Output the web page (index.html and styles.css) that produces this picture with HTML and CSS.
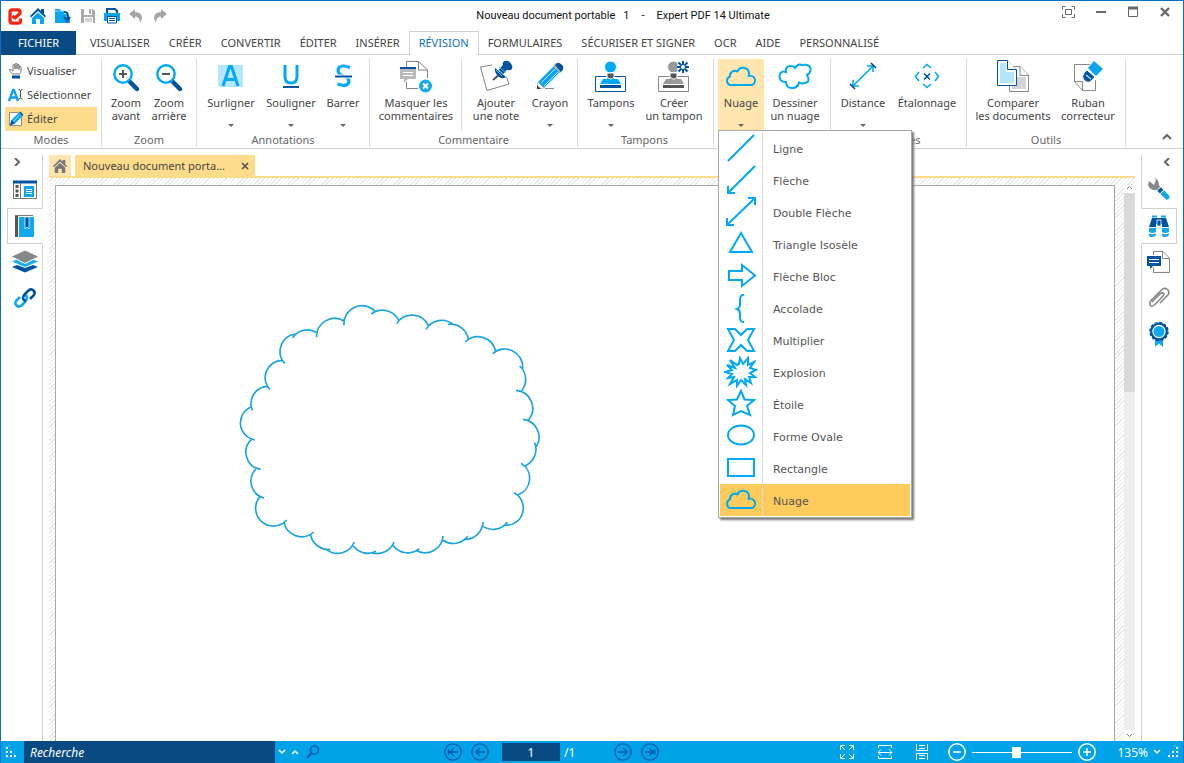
FILE: index.html
```html
<!DOCTYPE html>
<html lang="fr">
<head>
<meta charset="utf-8">
<title>Nouveau document portable 1 - Expert PDF 14 Ultimate</title>
<link rel="stylesheet" href="styles.css">
</head>
<body>
<div class="app">
<header class="titlebar">
  <div class="quick">
    <svg class="logo" width="14" height="17" viewBox="0 0 14 17"><path d="M12.500 10.500V13Q12.500 15.200 10 15.200H4.500Q2 15.200 2 12.500V4.500Q2 1.800 4.500 1.800H10Q12 1.800 12 4V5.500L7 10L4.500 8" fill="none" stroke="#f9230f" stroke-width="3.300" stroke-linejoin="round"/></svg>
    <button aria-label="Accueil"><svg width="16" height="16" viewBox="0 0 16 16"><use href="#i-home"/></svg></button>
    <button aria-label="Ouvrir"><svg width="18" height="16" viewBox="0 0 18 16"><path d="M1 1H6L7 3H16V15H1Z" fill="#0aa5ee"/><path d="M1 3H16" stroke="#8ed4f5"/><path d="M10 4H13Q17 5 14 10" fill="none" stroke="#fff" stroke-width="4"/><path d="M10 4Q16 4 13 12M10 9L13 13L16 9" fill="none" stroke="#0053a0" stroke-width="2"/></svg></button>
    <button aria-label="Enregistrer"><svg width="16" height="16" viewBox="0 0 16 16"><path d="M1 1H13L15 3V15H1Z" fill="#a9abad"/><path d="M4 1H12V7H4ZM4 9H13V15H4Z" fill="#fff"/><path d="M9 1H11V6H9Z" fill="#a9abad"/><path d="M5 11H12M5 13H12" stroke="#a9abad"/></svg></button>
    <button aria-label="Imprimer"><svg width="16" height="16" viewBox="0 0 16 16"><path d="M0 5H16V13H0Z" fill="#0aa5ee"/><path d="M3 5V1H11L13 3V5" fill="#fff" stroke="#0053a0" stroke-width="2"/><path d="M3.500 8.500H12.500V15H3.500Z" fill="#fff" stroke="#0053a0"/><path d="M5 10.500H11M5 12.500H11" stroke="#0053a0"/></svg></button>
    <button aria-label="Annuler"><svg width="16" height="16" viewBox="0 0 16 16"><use href="#i-undo"/></svg></button>
    <button aria-label="Rétablir"><svg width="16" height="16" viewBox="0 0 16 16"><g transform="matrix(-1 0 0 1 16 0)"><use href="#i-undo"/></g></svg></button>
  </div>
  <h1 class="title"><span>Nouveau document portable</span><span>1</span><span class="dash">-</span><span>Expert PDF 14 Ultimate</span></h1>
  <div class="winbtns">
    <button aria-label="Plein écran"><svg width="13" height="12" viewBox="0 0 13 12"><path d="M.5 3.500V.5H3.500M9.500 .5H12.500V3.500M12.500 8V11.500H9.500M3.500 11.500H.5V8M3.500 3.500H9.500V8.500H3.500Z" fill="none" stroke="#666"/></svg></button>
    <button aria-label="Réduire"><svg width="12" height="12" viewBox="0 0 12 12"><path d="M1 6H11" stroke="#666" stroke-width="2"/></svg></button>
    <button aria-label="Agrandir"><svg width="12" height="12" viewBox="0 0 12 12"><path d="M1.500 1V10.500H10.500V1" fill="none" stroke="#666"/><path d="M1 2H11" stroke="#666" stroke-width="3"/></svg></button>
    <button aria-label="Fermer"><svg width="12" height="12" viewBox="0 0 12 12"><path d="M2 2L10 10M10 2L2 10" stroke="#666" stroke-width="2.400"/></svg></button>
  </div>
</header>

<nav class="tabs">
  <button class="tab file">FICHIER</button>
  <button class="tab">VISUALISER</button>
  <button class="tab">CRÉER</button>
  <button class="tab">CONVERTIR</button>
  <button class="tab">ÉDITER</button>
  <button class="tab">INSÉRER</button>
  <button class="tab active">RÉVISION</button>
  <button class="tab">FORMULAIRES</button>
  <button class="tab">SÉCURISER ET SIGNER</button>
  <button class="tab">OCR</button>
  <button class="tab">AIDE</button>
  <button class="tab">PERSONNALISÉ</button>
</nav>

<section class="ribbon">
  <div class="group modes">
    <div class="mode-list">
      <button class="mode"><svg width="16" height="17" viewBox="0 0 16 17"><path d="M4.500 12Q1 9 1.500 7.500Q3 7 5 9V3Q6 1.500 7 3V7V2Q8 .5 9 2V7V2.500Q10 1 11 3V7.500V4.500Q12 3 13 5V9Q13 11 11.500 12Z" fill="#fff" stroke="#777"/><path d="M4 15H12" stroke="#00509f" stroke-width="3"/></svg>Visualiser</button>
      <button class="mode"><svg width="16" height="17" viewBox="0 0 16 17"><path d="M1 15L5 4H6L10 15M2.500 11.500H8.500" fill="none" stroke="#0aa5ee" stroke-width="2.400"/><path d="M10.500 3.500Q12.500 3.500 12.500 5V11.500Q12.500 13 10.500 13M14.500 3.500Q12.500 3.500 12.500 5M12.500 11.500Q12.500 13 14.500 13" fill="none" stroke="#555"/></svg>Sélectionner</button>
      <button class="mode on"><svg width="16" height="17" viewBox="0 0 16 17"><path d="M1.500 2.500H10L13.500 6V15.500H1.500Z" fill="#fff" stroke="#888"/><path d="M2 15L3.500 10L11 2.500L14.500 6L7 13.500Z" fill="#0aa5ee"/><path d="M11 2.500L12.500 1.500L15.500 5L14.500 6Z" fill="#0053a0"/><path d="M5 12L12 4.500" stroke="#8edaff"/><path d="M2 15.500L3.500 10L7 13.500Z" fill="#0053a0"/></svg>Éditer</button>
    </div>
    <h2>Modes</h2>
  </div>
  <div class="group zoomg">
    <div class="items">
      <button class="cmd w42"><svg class="ico" viewBox="0 0 36 36"><use href="#i-lens"/><path d="M11 16H19M15 12V20" stroke="#555" stroke-width="2"/></svg><span>Zoom<br>avant</span></button>
      <button class="cmd w44"><svg class="ico" viewBox="0 0 36 36"><use href="#i-lens"/><path d="M11 16H19" stroke="#555" stroke-width="2"/></svg><span>Zoom<br>arrière</span></button>
    </div>
    <h2>Zoom</h2>
  </div>
  <div class="group annot">
    <div class="items">
      <button class="cmd w62 drop"><svg class="ico" viewBox="0 0 36 36"><rect x="5" y="7" width="25" height="22" fill="#b5e6ff"/><path d="M10 28L16.500 8.500H18.500L25 28M12.500 21.500H22.500" fill="none" stroke="#00a9f4" stroke-width="3"/></svg><span>Surligner</span></button>
      <button class="cmd w58 drop"><svg class="ico" viewBox="0 0 36 36"><path d="M12 7V18.500Q12 25 18 25Q24 25 24 18.500V7" fill="none" stroke="#00a9f4" stroke-width="3"/><path d="M10 29H26" stroke="#0053a0" stroke-width="2"/></svg><span>Souligner</span></button>
      <button class="cmd w46 drop"><svg class="ico" viewBox="0 0 36 36"><path d="M25 9.500Q21 8 18.500 8Q13 8 13 12.500Q13 16 18.500 18Q24 20 24 23.500Q23 29.500 12.500 26" fill="none" stroke="#00a9f4" stroke-width="3.200"/><path d="M10 18.500H27" stroke="#fff" stroke-width="4"/><path d="M10 18.500H27" stroke="#0053a0" stroke-width="2"/></svg><span>Barrer</span></button>
    </div>
    <h2>Annotations</h2>
  </div>
  <div class="group comm">
    <div class="items">
      <button class="cmd w86"><svg class="ico" viewBox="0 0 36 36"><path d="M8.500 9V3.500H20.500L29.500 12V20M20.500 3.500V12H29.500M8.500 24V30.500H20" fill="none" stroke="#808285"/><path d="M2 9H18V21H10L6 25V21H2Z" fill="#b8babc"/><path d="M2 10H18" stroke="#0053a0" stroke-width="2"/><path d="M5 14.500H15M5 17.500H15" stroke="#fff"/><circle cx="27.500" cy="28" r="6.500" fill="#15a9ef"/><path d="M25 25.500L30 30.500M30 25.500L25 30.500" stroke="#fff" stroke-width="2"/></svg><span>Masquer les<br>commentaires</span></button>
      <i class="vsep"></i>
      <button class="cmd w62"><svg class="ico" viewBox="0 0 36 36"><path d="M14 7L2.500 9L9 32.500L31 26L28.500 19" fill="none" stroke="#808285"/><path d="M23 15L15 22" stroke="#555" stroke-width="2"/><path d="M17 10L28 19Q24 22 20 18Q16 14 17 10Z" fill="#0053a0"/><path d="M23 14L28 8" stroke="#0053a0" stroke-width="6"/><ellipse cx="29.500" cy="7.500" rx="5.500" ry="4" transform="rotate(45 29.500 7.500)" fill="#0053a0"/><path d="M21 9L28 15M18 12L24 18" stroke="#70aee0"/></svg><span>Ajouter<br>une note</span></button>
      <button class="cmd w46 drop"><svg class="ico" viewBox="0 0 36 36"><path d="M6 24L22 8L28 14L12 30L5 31Z" fill="#0aa5ee"/><path d="M9 25L23 11M12 28L26 14" stroke="#b2e7ff"/><path d="M6 24L5 31L12 30Z" fill="#fff" stroke="#999" stroke-width=".5"/><path d="M5 27V31H9Z" fill="#444"/><path d="M21 8L24 5L31 12L28 15Z" fill="#b4b4b4"/><path d="M23 7L25 5Q27 4 31 8Q32 11 29 14Z" fill="#0053a0"/><path d="M13 30.500H22" stroke="#888"/></svg><span>Crayon</span></button>
    </div>
    <h2>Commentaire</h2>
  </div>
  <div class="group tamp">
    <div class="items">
      <button class="cmd w62 drop"><svg class="ico" viewBox="0 0 36 36"><path d="M2.500 18.500H32.500V33.500H2.500Z" fill="none" stroke="#0053a0"/><circle cx="17.500" cy="9" r="6" fill="#00a9f4" stroke="#fff"/><path d="M14 15H21V21H25L28 26H7L10 21H14Z" fill="#00a9f4"/><path d="M14 15H21V19Q18 23 14 19Z" fill="#555" stroke="#fff"/><path d="M7 28.500H28" stroke="#0053a0" stroke-width="3"/></svg><span>Tampons</span></button>
      <button class="cmd w64"><svg class="ico" viewBox="0 0 36 36"><path d="M2.500 18.500H32.500V33.500H2.500Z" fill="none" stroke="#888"/><circle cx="17.500" cy="9" r="6" fill="#999" stroke="#fff"/><path d="M14 15H21V21H25L28 26H7L10 21H14Z" fill="#999"/><path d="M14 15H21V19Q18 23 14 19Z" fill="#555" stroke="#fff"/><path d="M7 28.500H28" stroke="#555" stroke-width="3"/><path d="M27 3V15M21 9H33M22.500 4.500L31.500 13.500M31.500 4.500L22.500 13.500" stroke="#fff" stroke-width="4"/><path d="M27 3V15M21 9H33M22.500 4.500L31.500 13.500M31.500 4.500L22.500 13.500" stroke="#0053a0" stroke-width="2"/><circle cx="27" cy="9" r="2" fill="#fff"/></svg><span>Créer<br>un tampon</span></button>
    </div>
    <h2>Tampons</h2>
  </div>
  <div class="group shapes">
    <div class="items">
      <div class="menu-anchor">
        <button class="cmd w46 drop on" aria-expanded="true"><svg class="ico" viewBox="0 0 36 36"><use href="#i-cloud" transform="translate(1 8)"/></svg><span>Nuage</span></button>
        <ul class="menu">
          <li><button><svg viewBox="0 0 34 32"><path d="M4 29L30 3"/></svg><span>Ligne</span></button></li>
          <li><button><svg viewBox="0 0 34 32"><path d="M4 29L31 2M4 22V29H11"/></svg><span>Flèche</span></button></li>
          <li><button><svg viewBox="0 0 34 32"><path d="M3 29L31 2M3 22V29H10M24 2H31V9"/></svg><span>Double Flèche</span></button></li>
          <li><button><svg viewBox="0 0 34 32"><path d="M17 5L28 24H6Z"/></svg><span>Triangle Isosèle</span></button></li>
          <li><button><svg viewBox="0 0 34 32"><path d="M5 11H18V5L31 15.500L18 26V20H5Z"/></svg><span>Flèche Bloc</span></button></li>
          <li><button><svg viewBox="0 0 34 32"><path d="M20 3Q16 2.500 16 8V12Q16 16 13 17Q16 18 16 22V25Q16 30.500 20 30"/></svg><span>Accolade</span></button></li>
          <li><button><svg viewBox="0 0 34 32"><path d="M4 5H11L17 11L23 5H30L24 16L30 27H23L17 21L11 27H4L10 16Z"/></svg><span>Multiplier</span></button></li>
          <li><button><svg viewBox="0 0 34 32"><path d="M15 8L16 2L19 8L24 2L24 9L30 6L26 12L32 14L26 17L31 21L25 21L27 27L21 23L22 29L17 24L13 30L13 24L6 28L10 21L4 22L8 18L1 16L8 14L3 9L11 12L6 4L13 9Z"/></svg><span>Explosion</span></button></li>
          <li><button><svg viewBox="0 0 34 32"><path d="M17 3L20.500 11.500L30 12L23 18L26 27L17 23L9 27L11 18L4 12L13 11.500Z"/></svg><span>Étoile</span></button></li>
          <li><button><svg viewBox="0 0 34 32"><ellipse cx="17" cy="15" rx="13" ry="9.500"/></svg><span>Forme Ovale</span></button></li>
          <li><button><svg viewBox="0 0 34 32"><rect x="4" y="7" width="26" height="17"/></svg><span>Rectangle</span></button></li>
          <li class="on"><button><svg viewBox="0 0 34 32"><use href="#i-cloud" transform="translate(0 5)"/></svg><span>Nuage</span></button></li>
        </ul>
      </div>
      <button class="cmd w62"><svg class="ico" viewBox="0 0 36 36"><path d="M9 24Q2 24 2.500 17.500Q4 12 9 14Q8 8 14 8Q17 8 18 10Q21 5 25 7Q32 6 33.500 10Q34 15 30 17Q34 24 28 25Q24 26 22 24.500Q21 30 15 30Q9 30 9 24Z" fill="none" stroke="#00a9f4" stroke-width="2"/></svg><span>Dessiner<br>un nuage</span></button>
    </div>
  </div>
  <div class="group mes">
    <div class="items">
      <button class="cmd w58 drop"><svg class="ico" viewBox="0 0 36 36"><path d="M8 28L28 8M8 22V28H14M22 8H28V14" fill="none" stroke="#00a9f4" stroke-width="1.600"/><path d="M5 26L10 31M26 5L31 10" stroke="#003c80" stroke-width="1.500"/></svg><span>Distance</span></button>
      <button class="cmd w70"><svg class="ico" viewBox="0 0 36 36"><path d="M14 10L18 6.500L22 10M14 26L18 29.500L22 26M10 14L6.500 18.500L10 23M26 14L29.500 18.500L26 23" fill="none" stroke="#00a9f4" stroke-width="1.600"/><path d="M15 15.500L21 21.500M21 15.500L15 21.500" stroke="#0053a0" stroke-width="1.600"/></svg><span>Étalonnage</span></button>
    </div>
    <h2>Mesures</h2>
  </div>
  <div class="group outils">
    <div class="items">
      <button class="cmd w86"><svg class="ico" viewBox="0 0 36 36"><path d="M14.500 8.500H25L33.500 17V33.500H14.500Z" fill="#fff" stroke="#888"/><path d="M17 19H31V31H17Z" fill="#d3d4d5"/><path d="M25 8.500V17.500H33.500" fill="#fff" stroke="#888"/><path d="M2.500 2.500H12L21.500 12V27.500H2.500Z" fill="#fff" stroke="#0053a0"/><path d="M5 5H11V14H19V25H5Z" fill="#b5e6ff"/><path d="M12.500 2.500V11.500H21.500" fill="#fff" stroke="#0053a0"/></svg><span>Comparer<br>les documents</span></button>
      <button class="cmd w64"><svg class="ico" viewBox="0 0 36 36"><path d="M20 6.500H4.500V23.500L12.500 32.500H25.500V22M4.500 23.500H12.500V32.500" fill="none" stroke="#888"/><path d="M24 3L33 11L26 18L18 10Z" fill="#0aa5ee"/><path d="M17 12L25 19L21 23Q18 26 14 22Q11 19 14 15Z" fill="#0053a0" stroke="#fff"/><path d="M16 17L21 21" stroke="#b5e6ff" stroke-width="1.500"/></svg><span>Ruban<br>correcteur</span></button>
    </div>
    <h2>Outils</h2>
  </div>
  <button class="collapse" aria-label="Réduire le ruban"><svg width="10" height="8" viewBox="0 0 10 8"><path d="M1 6L5 2L9 6" fill="none" stroke="#666" stroke-width="2"/></svg></button>
</section>

<main class="body">
  <aside class="rail left">
    <button class="chev" aria-label="Développer"><svg width="8" height="8" viewBox="0 0 8 8"><path d="M2 0L6 4L2 8" fill="none" stroke="#666" stroke-width="2"/></svg></button>
    <button aria-label="Miniatures"><svg width="26" height="26" viewBox="0 0 26 26"><path d="M1.500 5V21.500H24.500V5M8.500 5V21.500" fill="none" stroke="#777"/><path d="M1 5H25" stroke="#0053a0" stroke-width="3"/><path d="M5 8V20" stroke="#555" stroke-width="3" stroke-dasharray="3 1.500"/><rect x="12" y="9" width="10" height="11" fill="#0aa5ee"/><path d="M14 12.500H20M14 14.500H20M14 16.500H20" stroke="#fff"/></svg></button>
    <button class="on" aria-label="Signets"><svg width="26" height="26" viewBox="0 0 26 26"><path d="M3 3H6V24H3Z" fill="#555"/><path d="M3 2.500H21" stroke="#777"/><path d="M7 4H22V24H7Z" fill="#10a9f0"/><path d="M13 4H17V16L15 14L13 16Z" fill="#0053a0" stroke="#fff" stroke-width=".7"/></svg></button>
    <button aria-label="Calques"><svg width="26" height="26" viewBox="0 0 26 26"><path d="M0 18L13 23.500L26 18L21 16L13 19L5 16Z" fill="#0053a0"/><path d="M0 12.500L13 18L26 12.500L21 10.500H5Z" fill="#15b0f2"/><path d="M-1 7.500L13 14.500L27 7.500L13 1Z" fill="#888" stroke="#fff"/></svg></button>
    <button aria-label="Liens"><svg width="26" height="26" viewBox="0 0 26 26"><path d="M12 10Q15 10 15 13Q15 15 13 17L10 20Q7 23 4.500 20.500Q2 18 5 15L8 12" fill="none" stroke="#10a9f0" stroke-width="2.600"/><path d="M14 16Q11 15 11 13Q11 11 13 9L16 6Q19 3 21.500 5.500Q24 8 21 11L18 14" fill="none" stroke="#0053a0" stroke-width="2.600"/></svg></button>
  </aside>
  <div class="center">
    <div class="doctabs">
      <button class="hometab" aria-label="Accueil"><svg width="14" height="14" viewBox="0 0 16 16"><use href="#i-home"/></svg></button>
      <div class="doctab"><span>Nouveau document porta...</span><button aria-label="Fermer l'onglet"><svg width="8" height="8" viewBox="0 0 8 8"><path d="M1 1L7 7M7 1L1 7" stroke="#555" stroke-width="1.700"/></svg></button></div>
    </div>
    <div class="work">
      <div class="page">
        <svg class="drawing" width="340" height="280" viewBox="0 0 1020 840"><path d="M372 106A54 54 0 0 1 466 65M454 72A54 54 0 0 1 537 93M530 101A54 54 0 0 1 625 107M618 118A54 54 0 0 1 700 104M684 103A54 54 0 0 1 745 148M736 156A54 54 0 0 1 827 184M818 191A54 54 0 0 1 908 236M899 228A54 54 0 0 1 905 302M888 301A54 54 0 0 1 925 390M909 388A54 54 0 0 1 949 470M944 458A54 54 0 0 1 914 528M903 520A52 52 0 0 1 894 614M882 608A52 52 0 0 1 855 706M862 697A54 54 0 0 1 790 710M789 696A54 54 0 0 1 735 748M743 739A54 54 0 0 1 668 750M669 738A54 54 0 0 1 590 782M598 776A54 54 0 0 1 519 766M522 756A54 54 0 0 1 455 788M468 784A54 54 0 0 1 400 768M403 756A54 54 0 0 1 320 779M331 778A54 54 0 0 1 272 735M281 726A54 54 0 0 1 192 698M200 690A53 53 0 0 1 120 620M132 624A52 52 0 0 1 108 537M122 538A52 52 0 0 1 94 449M105 450A52 52 0 0 1 95 350M97 361A52 52 0 0 1 143 289M150 299A52 52 0 0 1 187 211M194 220A53 53 0 0 1 226 132M218 143A54 54 0 0 1 291 128M290 141A54 54 0 0 1 372 93" fill="none" stroke="#1ba4df" stroke-width="5"/></svg>
      </div>
      <div class="scroll">
        <svg width="7" height="5" viewBox="0 0 7 5"><path d="M1 4L3.500 1.500L6 4" fill="none" stroke="#777"/></svg>
        <div class="track"><div class="thumb"></div></div>
        <svg width="7" height="5" viewBox="0 0 7 5"><path d="M1 1L3.500 3.500L6 1" fill="none" stroke="#777"/></svg>
      </div>
    </div>
  </div>
  <aside class="rail right">
    <button class="chev" aria-label="Développer"><svg width="8" height="8" viewBox="0 0 8 8"><path d="M6 0L2 4L6 8" fill="none" stroke="#666" stroke-width="2"/></svg></button>
    <button aria-label="Outils"><svg width="26" height="26" viewBox="0 0 26 26"><path d="M3 4L8 8L10 3L8 1Q13 2 13 8L14 10L11 13Q4 14 2 8Z" fill="#888"/><path d="M13 12L17 16" stroke="#0053a0" stroke-width="5"/><path d="M17 16L21 20" stroke="#10a9f0" stroke-width="5" stroke-linecap="round"/><path d="M14 17L18 13" stroke="#fff"/></svg></button>
    <button class="on" aria-label="Rechercher"><svg width="26" height="26" viewBox="0 0 26 26"><path d="M6 3.500H11M15 3.500H20" stroke="#10a9f0" stroke-width="2"/><path d="M6 5H20L23 14H16V11H10V14H3Z" fill="#0053a0"/><path d="M11 7H15V13H11Z" fill="#0053a0" stroke="#fff" stroke-width=".8"/><path d="M3 15H10V19Q6.500 21 3 19ZM16 15H23V19Q19.500 21 16 19Z" fill="#10a9f0"/><path d="M3 20.500Q6.500 22 10 20.500V22Q9 24 6 24Q3 24 3 22ZM16 20.500Q19.500 22 23 20.500V22Q22 24 19 24Q16 24 16 22Z" fill="#10a9f0"/></svg></button>
    <button aria-label="Commentaires"><svg width="26" height="26" viewBox="0 0 26 26"><path d="M7.500 6V2.500H17L23.500 9V23.500H7.500V18M16.500 2.500V9.500H23.500" fill="none" stroke="#888"/><path d="M1 7H15V17H7L4 20V17H1Z" fill="#0053a0"/><path d="M3 10.500H13M3 13.500H13" stroke="#fff"/></svg></button>
    <button aria-label="Pièces jointes"><svg width="26" height="26" viewBox="0 0 26 26"><path d="M6 17L14.500 8.500Q17 7 18 9Q18 10 17 11L9 19.500Q6 22 4.500 20.500Q3 18 5 15.500L16 4.500Q19 2 22 5Q24 8 21.500 10.500L14 18" fill="none" stroke="#888" stroke-width="1.600"/></svg></button>
    <button aria-label="Signatures"><svg width="26" height="26" viewBox="0 0 26 26"><path d="M9 17H17V26L13 22.500L9 26Z" fill="#10a9f0"/><circle cx="13" cy="10.500" r="7.800" fill="#fff" stroke="#0053a0" stroke-width="2.200"/><circle cx="13" cy="10.500" r="9" fill="none" stroke="#0053a0" stroke-width="1.500" stroke-dasharray="3 1.700"/><circle cx="13" cy="10.500" r="5.500" fill="#10a9f0"/></svg></button>
  </aside>
</main>

<footer class="status">
  <div class="find">
    <svg class="grip" width="10" height="10" viewBox="0 0 10 10"><path d="M0 0H2V2H0ZM0 4H2V6H0ZM4 4H6V6H4ZM0 8H2V10H0ZM4 8H6V10H4ZM8 8H10V10H8Z" fill="#fff"/></svg>
    <input class="search" type="text" placeholder="Recherche" aria-label="Recherche">
    <button aria-label="Suivant"><svg width="8" height="6" viewBox="0 0 8 6"><path d="M1 1L4 4L7 1" fill="none" stroke="#fff" stroke-width="1.500"/></svg></button>
    <button aria-label="Précédent"><svg width="8" height="6" viewBox="0 0 8 6"><path d="M1 5L4 2L7 5" fill="none" stroke="#fff" stroke-width="1.500"/></svg></button>
    <button class="lens" aria-label="Rechercher"><svg width="14" height="14" viewBox="0 0 14 14"><g fill="none" stroke="#0060ad"><circle cx="8.500" cy="5" r="4" stroke-width="1.600"/><path d="M5.500 8L1 13" stroke-width="2.500"/></g></svg></button>
  </div>
  <div class="pager">
    <button aria-label="Première page"><svg width="18" height="18" viewBox="0 0 18 18"><circle cx="9" cy="9" r="8.200"/><path d="M4.500 6V12M6 9H14M10 5L6 9L10 13"/></svg></button>
    <button aria-label="Page précédente"><svg width="18" height="18" viewBox="0 0 18 18"><circle cx="9" cy="9" r="8.200"/><path d="M5 9H14M9 5L5 9L9 13"/></svg></button>
    <input type="text" value="1" aria-label="Page"><span>/1</span>
    <button class="fwd" aria-label="Page suivante"><svg width="18" height="18" viewBox="0 0 18 18"><circle cx="9" cy="9" r="8.200"/><path d="M13 9H4M9 5L13 9L9 13"/></svg></button>
    <button aria-label="Dernière page"><svg width="18" height="18" viewBox="0 0 18 18"><circle cx="9" cy="9" r="8.200"/><path d="M13.500 6V12M12 9H4M8 5L12 9L8 13"/></svg></button>
  </div>
  <div class="view">
    <button class="fit" aria-label="Page entière"><svg width="16" height="16" viewBox="0 0 16 16"><path d="M1.500 6V1.500H6M10 1.500H14.500V6M14.500 10V14.500H10M6 14.500H1.500V10M2 2L6 6M14 2L10 6M14 14L10 10M2 14L6 10"/></svg></button>
    <button class="fit" aria-label="Largeur"><svg width="16" height="16" viewBox="0 0 16 16"><path d="M1.500 4V1.500H14.500V4M1.500 12V14.500H14.500V12M1 8.500H15M4 5.500L1 8.500L4 11.500M12 5.500L15 8.500L12 11.500"/></svg></button>
    <button class="fit" aria-label="Continu"><svg width="14" height="16" viewBox="0 0 14 16"><path d="M1.500 0V6.500H12.500V0M4 1.500H10M4 4.500H10M1.500 16V9.500H12.500V16M4 11.500H10M4 14.500H10"/></svg></button>
    <button aria-label="Zoom arrière"><svg width="18" height="18" viewBox="0 0 18 18"><circle cx="9" cy="9" r="8.200"/><path d="M5 9H13"/></svg></button>
    <input class="zoom" type="range" min="0" max="100" value="44" aria-label="Zoom">
    <button aria-label="Zoom avant"><svg width="18" height="18" viewBox="0 0 18 18"><circle cx="9" cy="9" r="8.200"/><path d="M5 9H13M9 5V13"/></svg></button>
    <button class="pct"><span>135%</span><svg width="8" height="6" viewBox="0 0 8 6"><path d="M1 1L4 4L7 1"/></svg></button>
    <svg class="size" width="10" height="10" viewBox="0 0 10 10"><path d="M8 0H10V2H8ZM4 4H6V6H4ZM8 4H10V6H8ZM0 8H2V10H0ZM4 8H6V10H4ZM8 8H10V10H8Z" fill="#fff"/></svg>
  </div>
</footer>
</div>

<svg class="defs" width="0" height="0" aria-hidden="true">
  <defs>
    <g id="i-home"><path class="h-wall" d="M2 10L8 4.500L14 10V16H10V11H6V16H2Z"/><path class="h-roof" d="M0 8L8 0L11 3V1H14V6L16 8L15 9.500L8 3L1 9.500Z"/></g>
    <g id="i-undo"><path d="M1 6L7 1V4Q14 4 14 10Q14 12 12 15Q12 9 7 8.500V11Z" fill="#a4a6a9"/></g>
    <g id="i-lens"><path d="M22 24L29 31" stroke="#0053a0" stroke-width="4.500" stroke-linecap="round"/><circle cx="15" cy="16" r="8.700" fill="none" stroke="#00a9f4" stroke-width="2.400"/></g>
    <g id="i-cloud"><path d="M6 19A4.500 4.500 0 0 1 6 10.500A5 5 0 0 1 13.500 5.500A6 6 0 0 1 25 7Q25 9 24.500 10A4.800 4.800 0 0 1 28 19Z" fill="none" stroke="#00a9f4" stroke-width="2" stroke-linejoin="round"/></g>
  </defs>
</svg>
</body>
</html>
```

FILE: styles.css
```css
* { box-sizing: border-box; }
body { margin: 0; font: 11px/13px "Noto Sans", "Open Sans", sans-serif; color: #444; background: #fff; }
button { font: inherit; color: inherit; background: none; border: 0; padding: 0; margin: 0; }
h1, h2, ul { margin: 0; padding: 0; font: inherit; list-style: none; }
svg { display: block; flex: none; }
.defs { position: absolute; }
.app { display: flex; flex-direction: column; min-height: 100vh; border: 1px solid #0a6fc2; border-bottom: 0; }

.titlebar { display: flex; align-items: center; height: 30px; padding: 0 12px 0 7px; }
.quick { display: flex; align-items: center; gap: 8px; }
.h-roof { fill: var(--roof, #0053a0); }
.h-wall { fill: var(--wall, #0aa5ee); }
.title { flex: 1; display: flex; justify-content: center; gap: 8px; padding: 0 0 2px 16px; color: #111; font-family: Roboto, sans-serif; white-space: nowrap; }
.title .dash { margin: 0 4px; }
.winbtns { display: flex; align-items: center; gap: 20px; padding-bottom: 8px; }

.tabs { display: flex; height: 24px; border-bottom: 1px solid #d0d0d0; line-height: 20px; }
.tab { height: 24px; padding: 0 9px 2px; border: 1px solid transparent; border-bottom: 0; white-space: nowrap; margin-right: -1px; }
.tab.file { background: #0a4a83; color: #fff; width: 75px; margin-right: 4px; }
.tab.active { border-color: #d0d0d0; background: #fff; color: #0a72c0; }

.ribbon { display: flex; height: 94px; padding-top: 4px; border-bottom: 1px solid #d0d0d0; }
.group { display: flex; flex-direction: column; justify-content: space-between; height: 88px; border-right: 1px solid #dcdcdc; padding: 0 3px; flex: none; }
.group h2 { text-align: center; color: #666; height: 14px; }
.modes { width: 101px; padding: 0 4px; }
.zoomg { width: 95px; }
.annot { width: 173px; }
.comm { width: 208px; }
.tamp { width: 136px; padding: 0 4px 0 2px; }
.shapes { width: 117px; padding: 0 4px; }
.mes { width: 136px; }
.outils { width: 159px; }
.items { display: flex; height: 72px; }
.mode-list { display: flex; flex-direction: column; }
.mode { display: flex; align-items: center; gap: 3px; height: 24px; padding: 0 0 2px 3px; text-align: left; }
.mode.on { background: #ffdc8c; }
.cmd { position: relative; display: flex; flex-direction: column; align-items: center; gap: 2px; height: 72px; flex: none; white-space: nowrap; }
.cmd.on { background: #ffe6ae; }
.ico { width: 36px; height: 36px; margin-top: -1px; }
.drop::after { content: ""; position: absolute; left: 50%; bottom: 4px; margin-left: -3px; border: 3px solid transparent; border-top-color: #666; border-bottom: 0; }
.w42 { width: 42px; } .w44 { width: 44px; } .w46 { width: 46px; } .w58 { width: 58px; }
.w62 { width: 62px; } .w64 { width: 64px; } .w70 { width: 70px; } .w86 { width: 86px; }
.vsep { width: 1px; background: #dcdcdc; margin: 0 3px 0 2px; }
.collapse { align-self: flex-end; margin: 0 11px 7px auto; }

.menu-anchor { position: relative; }
.menu { position: absolute; z-index: 5; left: 0; top: 71px; width: 194px; padding: 1px; background: #fff; border: 1px solid #aaa; box-shadow: 2px 2px 2px #777; font-family: "DejaVu Sans", sans-serif; color: #555; }
.menu li { height: 32px; background: #fff; }
.menu li.on { background: #ffcb5c; }
.menu button { display: flex; width: 100%; height: 32px; text-align: left; align-items: center; }
.menu svg { width: 43px; height: 32px; padding: 0 4px; border-right: 1px solid #ddd; fill: none; stroke: #00a9f4; stroke-width: 2; }
.menu span { padding: 2px 0 0 10px; }

.body { display: flex; flex: 1; }
.rail { width: 42px; padding-top: 6px; flex: none; display: flex; flex-direction: column; }
.rail button { width: 36px; height: 36px; display: flex; align-items: center; justify-content: center; flex: none; }
.rail .chev { height: 14px; margin-bottom: 3px; }
.rail.left { background: linear-gradient(#d0d0d0, #d0d0d0) right 6px / 1px 100% no-repeat; padding-left: 6px; }
.rail.left .chev { margin-left: -8px; }
.rail.right { background: linear-gradient(#d0d0d0, #d0d0d0) left 6px / 1px 100% no-repeat; }
.rail.right .chev { align-self: flex-end; margin-right: -2px; }
.rail button.on { background: #fff; border: 1px solid #d0d0d0; }
.rail.left .on { border-right-color: #fff; }
.rail.right .on { border-left-color: #fff; }

.center { flex: 1; display: flex; flex-direction: column; padding: 6px 6px 0; }
.doctabs { display: flex; gap: 4px; height: 23px; border-bottom: 2px solid #ffdc8c; line-height: 21px; }
.hometab { width: 22px; height: 21px; background: #ffe6ae; display: flex; align-items: center; justify-content: center; --roof: #777; --wall: #777; }
.doctab { display: flex; align-items: center; justify-content: space-between; width: 180px; padding: 0 6px 0 8px; background: #ffdc8c; white-space: nowrap; }
.work { flex: 1; display: flex; padding: 7px 0 0 6px; background: repeating-linear-gradient(135deg, #fff 0 2px, #e9e9e9 2px 3px); }
.page { position: relative; flex: 1; background: #fff; border: 1px solid #aaa; border-bottom: 0; }
.drawing { position: absolute; left: 164px; top: 104px; }
.scroll { width: 11px; margin-left: 9px; background: #fff; display: flex; flex-direction: column; align-items: center; gap: 3px; padding-bottom: 3px; }
.track { flex: 1; width: 11px; background: #eee; }
.thumb { height: 37%; background: #d9d9d9; }

.status { display: flex; align-items: center; height: 22px; background: #00a2e8; color: #fff; flex: none; }
.status svg { fill: none; stroke: #fff; stroke-width: 1.500; }
.status .grip, .status .size { fill: #fff; stroke: none; }
.status input { border: 0; border-radius: 0; padding: 0; margin: 0; font: inherit; color: #fff; background: #0a4a83; }
.find { display: flex; align-items: center; width: 443px; height: 22px; }
.find .grip { margin: 0 8px 0 5px; }
.status .search { width: 251px; height: 22px; padding-left: 6px; font-style: italic; font-size: 12px; }
.search::placeholder { color: #fff; opacity: 1; }
.find button { margin-left: 1px; padding: 0 2px; }
.find .lens { margin-left: 3px; }
.pager { display: flex; align-items: center; font-size: 12px; }
.pager button { margin-right: 9px; }
.status .pager svg { stroke: #0060ad; }
.status .pager input { width: 58px; height: 18px; text-align: center; margin: 0 4px; }
.pager .fwd { margin-left: 39px; }
.view { display: flex; align-items: center; margin-left: auto; padding-right: 5px; }
.view .fit { margin-right: 22px; }
.status .fit svg { stroke-width: 1; }
.view .fit + button:not(.fit) { margin-left: -3px; }
.status .zoom { appearance: none; width: 100px; height: 18px; margin: 0 6px; background: linear-gradient(#fff, #fff) center / 100% 1px no-repeat; }
.zoom::-webkit-slider-thumb { appearance: none; width: 9px; height: 11px; background: #fff; border-radius: 0; }
.pct { display: flex; align-items: center; gap: 5px; margin: 0 7px 0 21px; font-size: 12px; }
```
